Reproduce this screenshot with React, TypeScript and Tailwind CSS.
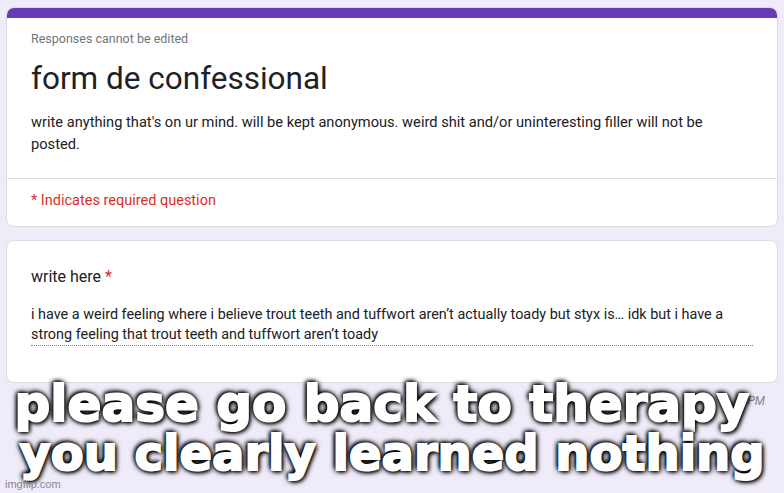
export default function App() {
  return (
    <div className="relative h-[493px] w-[784px] overflow-hidden bg-[#f0ebf8] px-[6px] pt-[7px] font-['Roboto','Liberation_Sans',sans-serif]">
      <div className="overflow-hidden rounded-[8px] border border-[#dadce0] bg-white">
        <div className="h-[10px] bg-[#673ab7]" />
        <div className="px-[24px] pb-[23px] pt-[13px]">
          <p className="text-[12.5px] leading-[16px] text-[#70757a]">Responses cannot be edited</p>
          <h1 className="mt-[14px] text-[31.5px] leading-[36px] text-[#202124]">form de confessional</h1>
          <p className="mt-[14px] pr-[40px] text-[14.65px] leading-[22px] text-[#202124]">
            write anything that's on ur mind. will be kept anonymous. weird shit and/or uninteresting filler will not be
            posted.
          </p>
        </div>
        <div className="border-t border-[#dadce0] px-[24px] pb-[15px] pt-[12px]">
          <p className="text-[14.5px] leading-[20px] text-[#d93025]">* Indicates required question</p>
        </div>
      </div>

      <div className="mt-[13px] rounded-[8px] border border-[#dadce0] bg-white px-[24px] pb-[36px] pt-[24px]">
        <p className="text-[16px] leading-[24px] text-[#202124]">
          write here <span className="text-[#d93025]">*</span>
        </p>
        <p className="mt-[16px] border-b border-dotted border-[#80868b] text-[14.4px] leading-[20px] text-[#202124]">
          i have a weird feeling where i believe trout teeth and tuffwort aren’t actually toady but styx is… idk but i have a
          strong feeling that trout teeth and tuffwort aren’t toady
        </p>
      </div>

      <p className="absolute right-[19px] top-[392px] text-[12px] italic text-[#80868b]">PM</p>

      <div className="absolute left-0 right-0 top-[380px] text-center font-['DejaVu_Sans',sans-serif] font-bold leading-[49px] text-white [-webkit-text-stroke:2px_#fff] [text-shadow:0_0_3px_#000,0_0_5px_#000,0_0_7px_#000,2px_2px_4px_#000,-2px_-2px_4px_#000]">
        <p className="pr-[20px] text-[50px]">please go back to therapy</p>
        <p className="text-[48px]">you clearly learned nothing</p>
      </div>

      <p className="absolute bottom-[3px] left-[5px] font-['Liberation_Sans',sans-serif] text-[11px] leading-[12px] text-[#8a8690]">imgflip.com</p>
    </div>
  );
}
